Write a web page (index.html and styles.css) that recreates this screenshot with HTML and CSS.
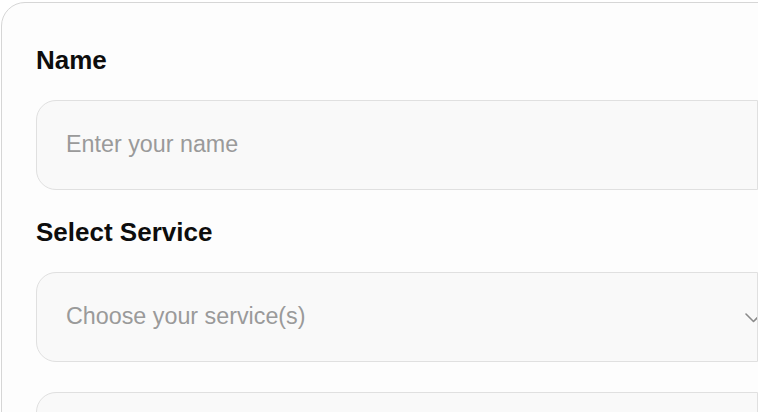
FILE: index.html
```html
<!DOCTYPE html>
<html lang="en">
<head>
<meta charset="utf-8">
<title>Contact form</title>
<link rel="stylesheet" href="styles.css">
</head>
<body>
  <form class="card">
    <label class="label" for="name">Name</label>
    <input class="field" id="name" type="text" placeholder="Enter your name">
    <div class="label label-gap">Select Service</div>
    <div class="field select">
      <span class="placeholder">Choose your service(s)</span>
      <svg class="chevron" width="17" height="10" viewBox="0 0 17 10" aria-hidden="true">
        <polyline points="1,1 8.5,8.5 16,1" fill="none" stroke="#8a8a8a" stroke-width="1.6" stroke-linecap="round" stroke-linejoin="round"/>
      </svg>
    </div>
    <input class="field field-gap" type="email" placeholder="Enter your email">
  </form>
</body>
</html>
```

FILE: styles.css
```css
html, body {
  margin: 0;
  padding: 0;
  background: #ffffff;
  overflow: hidden;
  width: 758px;
  height: 412px;
}

.card {
  box-sizing: border-box;
  width: 794px;
  margin: 2px 0 0 1px;
  padding: 42px 35px 40px 34px;
  border: 1px solid #d6d6d6;
  border-radius: 24px;
  background: #fdfdfd;
  display: flex;
  flex-direction: column;
  font-family: "Liberation Sans", Arial, sans-serif;
}

.label {
  display: block;
  font-size: 26px;
  line-height: 30px;
  font-weight: 700;
  color: #0d0d0d;
  margin-bottom: 25px;
}

.label-gap {
  margin-top: 27px;
}

.field {
  box-sizing: border-box;
  width: 722px;
  height: 90px;
  margin: 0;
  padding: 0 0 2px 29px;
  border: 1px solid #e0e0e0;
  border-radius: 20px 0 0 20px;
  background: #f9f9f9;
  font-family: "Liberation Sans", Arial, sans-serif;
  font-size: 23.3px;
  color: #222;
  outline: none;
}

.field::placeholder {
  color: #9a9a9a;
}

.select {
  display: flex;
  align-items: center;
  justify-content: space-between;
  overflow: hidden;
}

.placeholder {
  color: #9a9a9a;
}

.chevron {
  flex: none;
  margin-right: -5px;
  margin-top: 4px;
}

.field-gap {
  margin-top: 30px;
}
```
